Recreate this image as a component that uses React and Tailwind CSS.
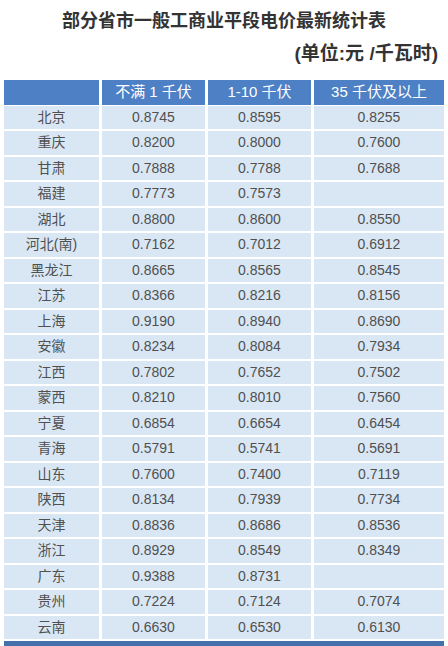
const rows = [
  ['北京', '0.8745', '0.8595', '0.8255'],
  ['重庆', '0.8200', '0.8000', '0.7600'],
  ['甘肃', '0.7888', '0.7788', '0.7688'],
  ['福建', '0.7773', '0.7573', ''],
  ['湖北', '0.8800', '0.8600', '0.8550'],
  ['河北(南)', '0.7162', '0.7012', '0.6912'],
  ['黑龙江', '0.8665', '0.8565', '0.8545'],
  ['江苏', '0.8366', '0.8216', '0.8156'],
  ['上海', '0.9190', '0.8940', '0.8690'],
  ['安徽', '0.8234', '0.8084', '0.7934'],
  ['江西', '0.7802', '0.7652', '0.7502'],
  ['蒙西', '0.8210', '0.8010', '0.7560'],
  ['宁夏', '0.6854', '0.6654', '0.6454'],
  ['青海', '0.5791', '0.5741', '0.5691'],
  ['山东', '0.7600', '0.7400', '0.7119'],
  ['陕西', '0.8134', '0.7939', '0.7734'],
  ['天津', '0.8836', '0.8686', '0.8536'],
  ['浙江', '0.8929', '0.8549', '0.8349'],
  ['广东', '0.9388', '0.8731', ''],
  ['贵州', '0.7224', '0.7124', '0.7074'],
  ['云南', '0.6630', '0.6530', '0.6130'],
];

const headers = ['', '不满 1 千伏', '1-10 千伏', '35 千伏及以上'];

export default function App() {
  return (
    <div
      className="w-[448px] h-[646px] overflow-hidden bg-white"
      style={{ fontFamily: '"Liberation Sans", "Noto Sans CJK SC", sans-serif' }}
    >
      {/* Title */}
      <div className="pt-[9px] h-[33px] text-center text-[18px] leading-[24px] font-bold text-[#333]">
        部分省市一般工商业平段电价最新统计表
      </div>
      <div className="mt-[9px] pr-[10px] h-[24px] text-right text-[19px] leading-[24px] font-bold text-[#333]">
        (单位:元 /千瓦时)
      </div>

      {/* Table */}
      <div className="mt-[14px] px-[4px]">
        <div className="grid grid-cols-[95px_103px_103px_130px] gap-x-[3px] gap-y-[2px] auto-rows-[23.5px]">
          {headers.map((h, i) => (
            <div
              key={i}
              className="h-[25px] bg-[#4d80c4] text-white text-[15px] flex items-center justify-center"
            >
              {h}
            </div>
          ))}
          {rows.map((r) =>
            r.map((c, j) => (
              <div
                key={r[0] + j}
                className="bg-[#d9e7f5] text-[#505050] text-[14px] flex items-center justify-center"
              >
                {c}
              </div>
            ))
          )}
        </div>
        <div className="mt-[2px] h-[20px] bg-[#4470ab]" />
      </div>
    </div>
  );
}
